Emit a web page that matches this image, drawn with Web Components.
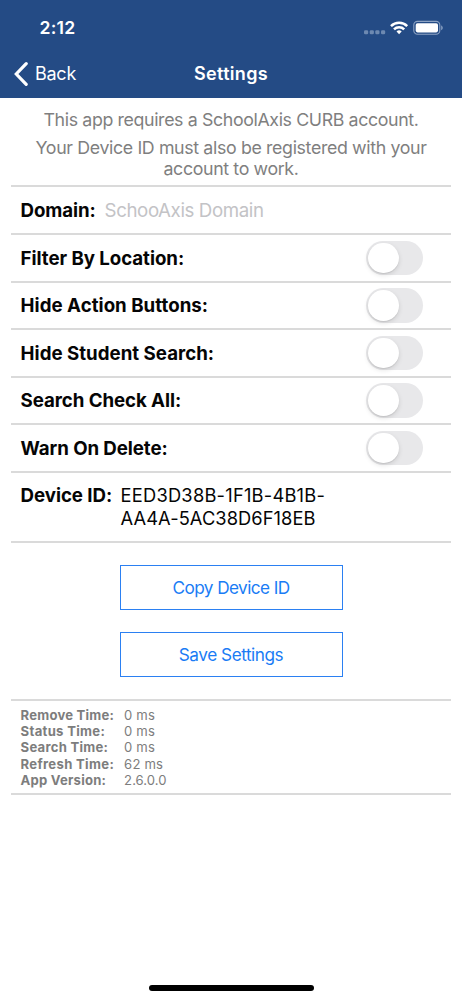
<!DOCTYPE html>
<html lang="en">
<head>
<meta charset="utf-8">
<title>Settings</title>
<style>
html,body{margin:0;padding:0;background:#fff}
body{font-family:Inter,"Liberation Sans",sans-serif;font-size:18px;color:#050505}
</style>
</head>
<body>
<settings-screen></settings-screen>
<script>
const define = (name, html, setup) => customElements.define(name, class extends HTMLElement {
  connectedCallback() {
    if (this.shadowRoot) return;
    const t = document.createElement('template');
    t.innerHTML = html;
    this.attachShadow({mode: 'open'}).append(t.content.cloneNode(true));
    if (setup) setup(this, this.shadowRoot);
  }
});

/* One line of text tracked out or in to occupy a given width. */
define('fit-text', `<style>
:host{display:inline-block;white-space:nowrap;text-align:left}
span{display:inline-block}
</style><span><slot></slot></span>`, (el, root) => {
  const s = root.querySelector('span'), w = +el.getAttribute('w');
  const d = (w - s.getBoundingClientRect().width) / el.textContent.length;
  s.style.letterSpacing = d.toFixed(3) + 'px';
  el.style.width = w + 'px';
});

define('status-bar', `<style>
:host{display:flex;height:50px;box-sizing:border-box;padding:17px 19px 0 39.5px;justify-content:space-between;align-items:flex-start;font-size:17.6px;line-height:22px;font-weight:600}
svg{display:block}
</style><fit-text w="36">2:12</fit-text>
<svg width="80" height="22" viewBox="363 17 80 22">
<g fill="#6d89b1"><rect x="364" y="30.2" width="4.2" height="4" rx="1.3"/><rect x="369.7" y="30.2" width="4.2" height="4" rx="1.3"/><rect x="375.3" y="30.2" width="4.2" height="4" rx="1.3"/><rect x="381" y="30.2" width="4.2" height="4" rx="1.3"/></g>
<g fill="none" stroke="#fff" stroke-width="2.5"><path d="M391 26.1a11.4 11.4 0 0 1 16.2 0"/><path d="M394 29.4a7.2 7.2 0 0 1 10.2 0"/></g>
<path d="M399.1 34.2l-2.6-2.6a3.7 3.7 0 0 1 5.2 0z" fill="#fff"/>
<rect x="413.8" y="21.4" width="26" height="12.8" rx="3.7" fill="none" stroke="#8ca2c3" stroke-width="1.1"/>
<rect x="415.7" y="23.2" width="22.3" height="9.2" rx="1.8" fill="#fff"/>
<path d="M441.2 25.5c2 .7 2 4 0 4.7z" fill="#8ca2c3"/>
</svg>`);

define('nav-bar', `<style>
:host{display:grid;grid-template-columns:1fr auto 1fr;height:47.7px;align-items:center;line-height:24px;color:#fff}
.back{display:flex;align-items:center;gap:7px;padding-left:14px;font-weight:370;font-size:18px}
.title{font-weight:600;font-size:18px}
</style><div class="back"><svg width="14" height="24" viewBox="0 0 14 24"><path d="M12.2 1.7L2.3 12l9.9 10.3" fill="none" stroke="#fff" stroke-width="3.2" stroke-linecap="round" stroke-linejoin="miter"/></svg><fit-text w="41">Back</fit-text></div>
<fit-text class="title" w="74">Settings</fit-text><span></span>`);

define('intro-text', `<style>
:host{display:flex;flex-direction:column;align-items:center;height:87.7px;box-sizing:border-box;padding-top:11.3px;font-size:17.8px;line-height:21px;color:#7f7f7f}
.b{margin-top:7.5px}
</style><fit-text w="375">This app requires a SchoolAxis CURB account.</fit-text>
<fit-text class="b" w="391">Your Device ID must also be registered with your</fit-text>
<fit-text w="135">account to work.</fit-text>`);

define('toggle-switch', `<style>
:host{display:block;width:57px;height:34.7px;border-radius:18px;background:#e8e8ea;box-sizing:border-box;padding:2px}
i{display:block;width:30.7px;height:30.7px;border-radius:50%;background:#fff;box-shadow:0 2px 5px rgba(0,0,0,.12),0 1px 1px rgba(0,0,0,.08)}
</style><i></i>`);

define('setting-row', `<style>
:host{display:flex;height:47.5px;box-sizing:border-box;border-top:2px solid #dadada;align-items:center;padding:0 27.6px 0 9.6px;line-height:22.5px;font-size:18.7px}
.l{font-weight:650;padding-top:1.4px}
.v{flex:1;display:flex;justify-content:flex-end}
:host([kind=field]) .v{justify-content:flex-start;padding:1.4px 0 0 9px;color:#c3c3c6;font-weight:370}
:host([kind=id]){height:70.2px;align-items:flex-start;padding-top:11px}
:host([kind=id]) .v{flex-direction:column;justify-content:flex-start;align-items:flex-start;padding:.6px 0 0 8.5px;font-size:18.3px}
</style><div class="l"><slot name="label"></slot></div><div class="v"><slot></slot></div>`);

define('outline-button', `<style>
:host{display:block;width:223px;height:45px}
button{font:inherit;font-size:17.2px;color:#1a7cf5;background:none;border:1.4px solid #2b80f2;border-radius:0;width:100%;height:100%;padding:1px 0 0;margin:0;display:flex;align-items:center;justify-content:center;line-height:22px}
</style><button><slot></slot></button>`);

define('stats-list', `<style>
:host{display:grid;grid-template-columns:103.5px 1fr;align-content:start;height:96px;box-sizing:border-box;border:solid #dadada;border-width:2px 0;padding:6px 0 0 9.6px;font-size:13.1px;line-height:16.15px;color:#7d7d7d}
.l{font-weight:650}
.r{display:contents}
</style>${[['Remove Time:',93.5,'0 ms',31],['Status Time:',84.5,'0 ms',31],['Search Time:',87.5,'0 ms',31],['Refresh Time:',93.5,'62 ms',39],['App Version:',85.5,'2.6.0.0',42.5]]
.map(r => `<div class="r"><fit-text class="l" w="${r[1]}">${r[0]}</fit-text><fit-text w="${r[3]}">${r[2]}</fit-text></div>`).join('')}`);

const rows = [['Filter By Location:',163.5],['Hide Action Buttons:',187.5],['Hide Student Search:',193.5],['Search Check All:',160.5],['Warn On Delete:',147]];
define('settings-screen', `<style>
:host{display:flex;flex-direction:column;height:1000px;overflow:hidden;background:#fff}
header{background:#244b85;color:#fff;flex:none}
main{margin:0 11px;flex:1}
.form{border-bottom:2px solid #dadada}
.actions{display:flex;flex-direction:column;align-items:center;gap:22px;padding:21.6px 0 22.4px}
.home{width:165px;height:5.8px;border-radius:3px;background:#000;margin:0 auto 9.2px}
</style><header><status-bar></status-bar><nav-bar></nav-bar></header>
<main><intro-text></intro-text><div class="form">
<setting-row kind="field" style="height:48px"><fit-text slot="label" w="75">Domain:</fit-text><fit-text w="159">SchooAxis Domain</fit-text></setting-row>
${rows.map(r => `<setting-row><fit-text slot="label" w="${r[1]}">${r[0]}</fit-text><toggle-switch></toggle-switch></setting-row>`).join('')}
<setting-row kind="id"><fit-text slot="label" w="91.5">Device ID:</fit-text><fit-text w="204.5">EED3D38B-1F1B-4B1B-</fit-text><fit-text w="195">AA4A-5AC38D6F18EB</fit-text></setting-row>
</div><div class="actions"><outline-button><fit-text w="117">Copy Device ID</fit-text></outline-button><outline-button><fit-text w="104.5">Save Settings</fit-text></outline-button></div>
<stats-list></stats-list></main><div class="home"></div>`);
</script>
</body>
</html>
